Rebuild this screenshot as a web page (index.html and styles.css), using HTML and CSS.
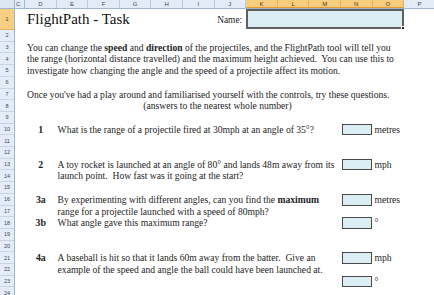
FILE: index.html
```html
<!DOCTYPE html>
<html>
<head>
<meta charset="utf-8">
<link rel="stylesheet" href="styles.css">
</head>
<body>
<div class="sheet">
  <div class="colhead">
    <div class="corner"></div>
    <div class="ch part">C</div>
    <div class="ch">D</div><div class="ch">E</div><div class="ch">F</div><div class="ch">G</div>
    <div class="ch">H</div><div class="ch">I</div><div class="ch">J</div>
    <div class="ch sel">K</div><div class="ch sel">L</div><div class="ch sel">M</div><div class="ch sel">N</div><div class="ch sel">O</div>
    <div class="ch">P</div>
  </div>
  <div class="main">
    <div class="rowhead">
      <div class="rh r1 sel">1</div>
      <div class="rh">2</div><div class="rh">3</div><div class="rh">4</div><div class="rh">5</div>
      <div class="rh">6</div><div class="rh">7</div><div class="rh">8</div><div class="rh">9</div>
      <div class="rh">10</div><div class="rh">11</div><div class="rh">12</div><div class="rh">13</div>
      <div class="rh">14</div><div class="rh">15</div><div class="rh">16</div><div class="rh">17</div>
      <div class="rh">18</div><div class="rh">19</div><div class="rh">20</div><div class="rh">21</div>
      <div class="rh">22</div><div class="rh">23</div><div class="rh">24</div>
    </div>
    <div class="cells">
      <div class="title">FlightPath - Task</div>
      <div class="namelbl">Name:</div>
      <div class="namebox"><span class="handle"></span></div>

      <div class="para r3">You can change the <b>speed</b> and <b>direction</b> of the projectiles, and the FlightPath tool will tell you</div>
      <div class="para r4">the range (horizontal distance travelled) and the maximum height achieved.&nbsp; You can use this to</div>
      <div class="para r5">investigate how changing the angle and the speed of a projectile affect its motion.</div>
      <div class="para r7">Once you've had a play around and familiarised yourself with the controls, try these questions.</div>
      <div class="para center r8">(answers to the nearest whole number)</div>

      <div class="qn r10">1</div>
      <div class="qt r10">What is the range of a projectile fired at 30mph at an angle of 35°?</div>
      <div class="box r10"></div><div class="unit r10">metres</div>

      <div class="qn r13">2</div>
      <div class="qt r13">A toy rocket is launched at an angle of 80° and lands 48m away from its</div>
      <div class="box r13"></div><div class="unit r13">mph</div>
      <div class="qt r14">launch point.&nbsp; How fast was it going at the start?</div>

      <div class="qn r16">3a</div>
      <div class="qt r16">By experimenting with different angles, can you find the <b>maximum</b></div>
      <div class="box r16"></div><div class="unit r16">metres</div>
      <div class="qt r17">range for a projectile launched with a speed of 80mph?</div>
      <div class="qn r18">3b</div>
      <div class="qt r18">What angle gave this maximum range?</div>
      <div class="box r18"></div><div class="unit r18">°</div>

      <div class="qn r21">4a</div>
      <div class="qt r21">A baseball is hit so that it lands 60m away from the batter.&nbsp; Give an</div>
      <div class="box r21"></div><div class="unit r21">mph</div>
      <div class="qt r22">example of the speed and angle the ball could have been launched at.</div>
      <div class="box r23"></div><div class="unit r23">°</div>
    </div>
  </div>
</div>
</body>
</html>
```
FILE: styles.css
```css
* { box-sizing: border-box; }
html, body { margin: 0; padding: 0; background: #fff; }
body { width: 434px; height: 295px; overflow: hidden; }

.sheet { width: 434px; height: 295px; overflow: hidden; }

.colhead {
  display: flex;
  height: 9px;
  background: #e3ebf6;
  border-bottom: 1px solid #9eb6ce;
  font-family: "Liberation Sans", sans-serif;
  font-size: 6px;
  color: #3d4a5c;
}
.corner { width: 15px; flex: none; border-right: 1px solid #9eb6ce; background: #dde7f3; }
.ch {
  width: 31.6px; flex: none;
  text-align: center; line-height: 8px;
  border-right: 1px solid #b8cbe0;
}
.ch.part { width: 10px; overflow: hidden; text-align: left; text-indent: 1px; border-right: 1px solid #9eb6ce; }
.ch.sel { background: #f6cd7e; color: #4a3a1a; border-right-color: #e4b35c; border-bottom: 1px solid #e39b2c; }

.main { display: flex; }

.rowhead {
  width: 15px; flex: none;
  display: grid;
  grid-template-rows: 21px repeat(23, 11.71px);
  background: #e4ecf7;
  border-right: 1px solid #9eb6ce;
  font-family: "Liberation Sans", sans-serif;
  font-size: 5.5px;
  color: #3d4a5c;
}
.rh {
  display: flex; align-items: center; justify-content: center;
  border-bottom: 1px solid #c5d4e6;
}
.rh.sel { background: #f7cf82; color: #4a3a1a; border-bottom-color: #e4b35c; }

.cells {
  flex: 1;
  display: grid;
  grid-template-columns: 10px repeat(13, 31.6px);
  grid-template-rows: 21px repeat(23, 11.71px);
  font-family: "Liberation Serif", serif;
  font-size: 9.6px;
  line-height: 11.71px;
  color: #1e1e1e;
  white-space: nowrap;
}

.title {
  grid-row: 1; grid-column: 2 / span 6;
  font-size: 15px; line-height: 20px; padding-left: 2px; color: #111;
}
.namelbl { grid-row: 1; grid-column: 8; text-align: right; padding-right: 4px; line-height: 22px; font-size: 9.4px; }
.namebox {
  grid-row: 1; grid-column: 9 / span 5;
  background: #dbeef4;
  border: 2px solid #5f5f5f;
  margin-bottom: 1px;
  position: relative;
}
.handle {
  position: absolute; right: -3px; bottom: -3px;
  width: 4px; height: 4px; background: #222; border: 1px solid #fff;
}

.para { grid-column: 2 / span 13; padding-left: 2px; }
.para.center { grid-column: 2 / span 12; text-align: center; padding-left: 6px; }

.qn { grid-column: 2; text-align: center; font-weight: bold; font-size: 9.8px; }
.qt { grid-column: 3 / span 9; padding-left: 1px; }
.box {
  grid-column: 12;
  background: #dbeef4;
  border: 1px solid #4a4a4a;
  margin: 0 0.5px 0 1px;
}
.unit { grid-column: 13; padding-left: 2px; }

.r3 { grid-row: 3; } .r4 { grid-row: 4; } .r5 { grid-row: 5; }
.r7 { grid-row: 7; } .r8 { grid-row: 8; }
.r10 { grid-row: 10; } .r13 { grid-row: 13; } .r14 { grid-row: 14; }
.r16 { grid-row: 16; } .r17 { grid-row: 17; } .r18 { grid-row: 18; }
.r21 { grid-row: 21; } .r22 { grid-row: 22; } .r23 { grid-row: 23; }
```
